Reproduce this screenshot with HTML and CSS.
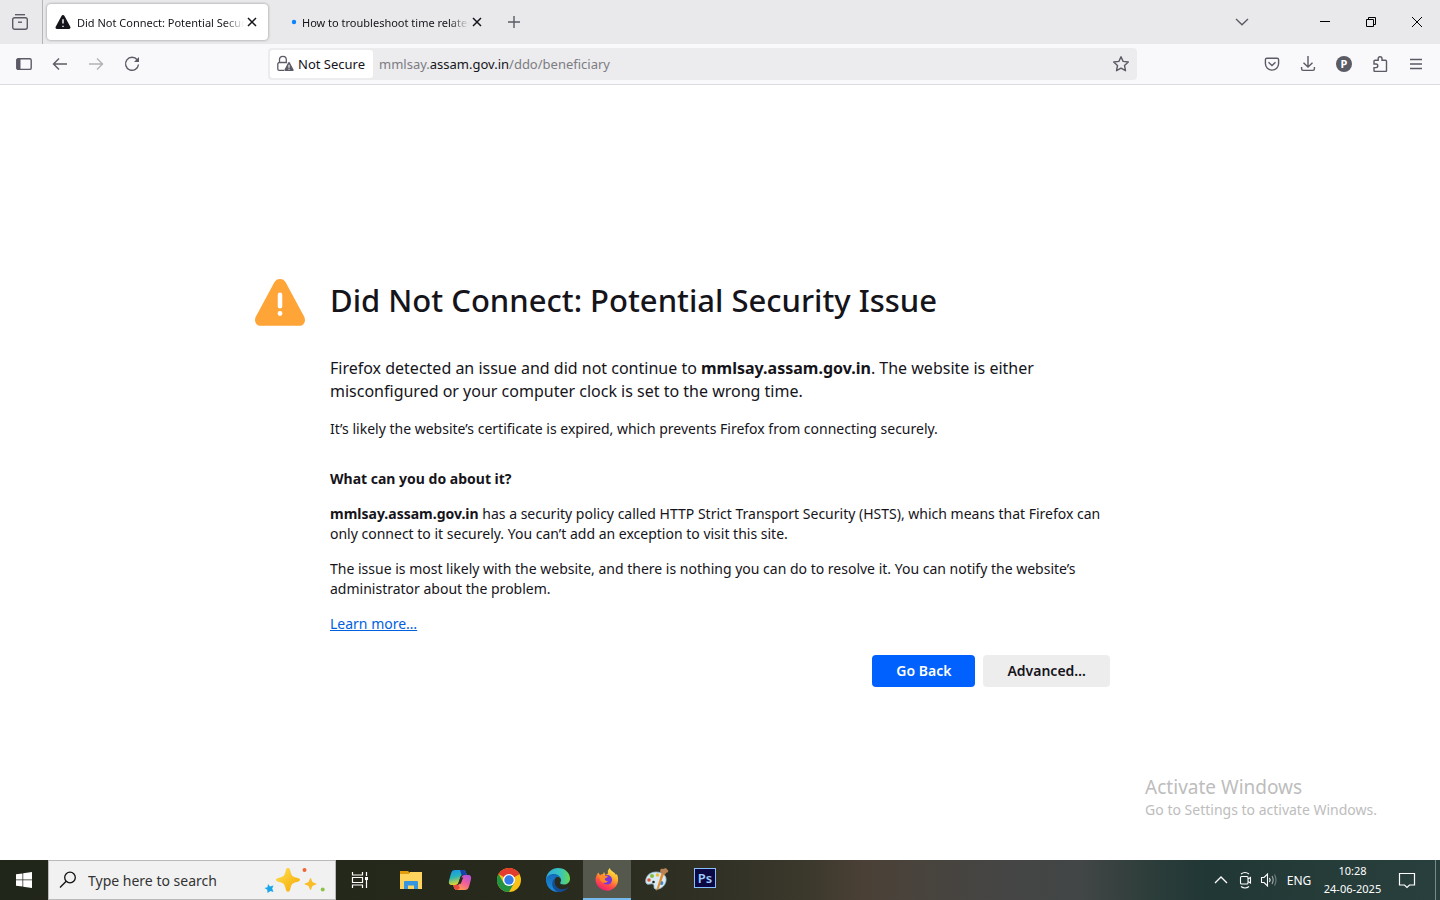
FILE: index.html
```html
<!DOCTYPE html>
<html lang="en">
<head>
<meta charset="utf-8">
<title>Did Not Connect: Potential Security Issue</title>
<link rel="stylesheet" href="styles.css">
</head>
<body>
<header class="tabbar">
  <button class="view-btn" aria-label="Firefox View"><svg class="ic" width="18" height="18" viewBox="0 0 18 18"><path d="M4 1.700h10"/><rect x="1.700" y="4.700" width="14.600" height="11.600" rx="2"/><path d="M7 9.200h4"/></svg></button>
  <div class="tabs">
    <div class="tab active">
      <svg width="16" height="16" viewBox="0 0 16 16"><path d="M8 1c.7 0 1.200.3 1.500.9l5.800 10.800c.6 1.100-.1 2.300-1.300 2.300H2c-1.200 0-1.900-1.200-1.300-2.300L6.500 1.900C6.800 1.300 7.300 1 8 1z" fill="#15141a"/><path d="M8 5.300v4.200M8 11.700v1.200" stroke="#fff" stroke-width="1.400"/></svg>
      <span class="tab-title">Did Not Connect: Potential Security Issue</span>
      <button class="tab-close" aria-label="Close tab"><svg width="10" height="10" viewBox="0 0 10 10"><path d="M1 1l8 8M9 1L1 9" stroke="#15141a" stroke-width="1.500"/></svg></button>
    </div>
    <div class="tab">
      <svg width="16" height="16" viewBox="0 0 16 16"><circle cx="8" cy="8" r="2.200" fill="#0a84ff"/></svg>
      <span class="tab-title">How to troubleshoot time related errors</span>
      <button class="tab-close" aria-label="Close tab"><svg width="10" height="10" viewBox="0 0 10 10"><path d="M1 1l8 8M9 1L1 9" stroke="#15141a" stroke-width="1.500"/></svg></button>
    </div>
  </div>
  <button class="tool" aria-label="New tab"><svg class="ic" width="12" height="12" viewBox="0 0 12 12"><path d="M6 0v12M0 6h12"/></svg></button>
  <div class="grow"></div>
  <button class="tool list-tabs" aria-label="List all tabs"><svg class="ic" width="14" height="8" viewBox="0 0 14 8"><path d="M1 1l6 5.700L13 1"/></svg></button>
  <button class="win" aria-label="Minimize"><svg width="10" height="10" viewBox="0 0 10 10"><path d="M0 4.500h10" stroke="#000"/></svg></button>
  <button class="win" aria-label="Restore"><svg width="10" height="10" viewBox="0 0 10 10" fill="none" stroke="#000"><path d="M.5 2.500h7v7h-7zM2.500 2.500v-2h7v7h-2"/></svg></button>
  <button class="win" aria-label="Close"><svg width="10" height="10" viewBox="0 0 10 10"><path d="M0 0l10 10M10 0L0 10" stroke="#000"/></svg></button>
</header>
<nav class="toolbar">
  <div class="tools">
    <button class="tool" aria-label="Sidebar"><svg class="ic" width="16" height="16" viewBox="0 0 16 16"><rect x=".8" y="2.800" width="14.400" height="10.600" rx="1.500"/><path d="M1 3h3v10H1z" fill="#5b5b66" stroke-width="1"/></svg></button>
    <button class="tool" aria-label="Back"><svg class="ic" width="16" height="16" viewBox="0 0 16 16"><path d="M15 8H1.500M7 2.500L1.500 8 7 13.500"/></svg></button>
    <button class="tool" aria-label="Forward" disabled><svg class="ic faint" width="16" height="16" viewBox="0 0 16 16"><path d="M1 8h13.500M9 2.500L14.500 8 9 13.500"/></svg></button>
    <button class="tool" aria-label="Reload"><svg class="ic" width="16" height="16" viewBox="0 0 16 16"><path d="M13.200 3.800A6.500 6.500 0 1 0 14.500 8.500"/><path d="M15 1v5h-5z" fill="#5b5b66" stroke="none"/></svg></button>
  </div>
  <div class="urlbar">
    <button class="identity"><svg width="18" height="18" viewBox="0 0 18 18"><path d="M8 15.300H3.200a1.400 1.400 0 0 1-1.400-1.400V9a1.500 1.500 0 0 1 1.500-1.500h7M3.500 7.500V4.800a3.400 3.400 0 0 1 6.800 0v3.500" fill="none" stroke="#5b5b66" stroke-width="1.300"/><path d="M12.200 7.400c.4-.7 1.200-.7 1.600 0l3.700 7.100c.4.800 0 1.500-.8 1.500H9.300c-.8 0-1.200-.7-.8-1.500z" fill="#5b5b66"/><path d="M13 9.800v3M13 13.700v1" stroke="#fff" stroke-width="1.100"/></svg><span>Not Secure</span></button>
    <div class="address" role="textbox" aria-label="Address" tabindex="0">mmlsay.<b>assam.gov.in</b>/ddo/beneficiary</div>
    <button class="star" aria-label="Bookmark this page"><svg class="ic" width="18" height="18" viewBox="0 0 18 18"><path stroke-linejoin="round" d="M9 1.700l2.100 4.700 5.200.6-3.800 3.500 1 5.200L9 13.200l-4.500 2.500 1-5.200L1.700 7l5.200-.6z"/></svg></button>
  </div>
  <div class="tools tools-end">
    <button class="tool" aria-label="Pocket"><svg class="ic" width="16" height="16" viewBox="0 0 16 16"><path d="M3 2.200h10a1.600 1.600 0 0 1 1.600 1.600V7.500a6.600 6.600 0 0 1-13.200 0V3.800A1.600 1.600 0 0 1 3 2.200z"/><path d="M4.500 6.300L8 9.600l3.500-3.300"/></svg></button>
    <button class="tool" aria-label="Downloads"><svg class="ic" width="16" height="16" viewBox="0 0 16 16"><path d="M8 0v11M3.500 6.700L8 11l4.500-4.300M1.600 11v1.800a1.600 1.600 0 0 0 1.600 1.600h9.600a1.600 1.600 0 0 0 1.600-1.600V11"/></svg></button>
    <button class="tool" aria-label="Account"><span class="avatar">P</span></button>
    <button class="tool" aria-label="Extensions"><svg class="ic" width="16" height="16" viewBox="0 0 16 16"><path d="M2 8V5.200c0-.6.4-1 1-1h3.200V2.700a1.900 1.900 0 0 1 3.800 0v1.500h3.500c.6 0 1 .4 1 1v9.300c0 .6-.4 1-1 1H3c-.6 0-1-.4-1-1v-2.900h2a1.800 1.800 0 0 0 0-3.600z"/></svg></button>
    <button class="tool" aria-label="Menu"><svg class="ic" width="14" height="12" viewBox="0 0 14 12"><path d="M1 1.500h12M1 6h12M1 10.500h12"/></svg></button>
  </div>
</nav>
<main class="page">
  <div class="error">
    <svg class="warning" width="52" height="50" viewBox="0 0 52 50"><path d="M26 1c2.500 0 4.400 1.200 5.600 3.300l18.500 34.200c2.300 4.400-.2 9.300-5 9.300H6.900c-4.800 0-7.300-4.900-5-9.300L20.400 4.300C21.600 2.200 23.500 1 26 1z" fill="#ffa436"/><path d="M26 16.700v11.500" stroke="#fff" stroke-width="4.500" stroke-linecap="round"/><circle cx="26" cy="35.500" r="2.400" fill="#fff"/></svg>
    <div class="text">
      <h1>Did Not Connect: Potential Security Issue</h1>
      <p class="lead">Firefox detected an issue and did not continue to <b>mmlsay.assam.gov.in</b>. The website is either<br>misconfigured or your computer clock is set to the wrong time.</p>
      <p>It’s likely the website’s certificate is expired, which prevents Firefox from connecting securely.</p>
      <h2>What can you do about it?</h2>
      <p><b>mmlsay.assam.gov.in</b> has a security policy called HTTP Strict Transport Security (HSTS), which means that Firefox can<br>only connect to it securely. You can’t add an exception to visit this site.</p>
      <p>The issue is most likely with the website, and there is nothing you can do to resolve it. You can notify the website’s<br>administrator about the problem.</p>
      <p><a href="#">Learn more…</a></p>
      <div class="actions"><button class="btn primary">Go Back</button><button class="btn">Advanced…</button></div>
    </div>
  </div>
  <div class="watermark"><div class="wm-title">Activate Windows</div><div>Go to Settings to activate Windows.</div></div>
</main>
<footer class="taskbar">
  <button class="task" aria-label="Start"><svg width="16" height="16" viewBox="0 0 16 16"><path fill="#fff" d="M0 2.300l6.500-.9v6.200H0zM7.200 1.300L16 0v7.600H7.200zM0 8.300h6.500v6.300L0 13.700zM7.200 8.300H16V16l-8.800-1.300z"/></svg></button>
  <label class="search">
    <svg width="18" height="18" viewBox="0 0 18 18" fill="none" stroke="#111" stroke-width="1.300"><circle cx="11" cy="6.500" r="5.300"/><path d="M7.200 10.300L1 16.500"/></svg>
    <input type="text" placeholder="Type here to search" aria-label="Search">
    <svg width="62" height="28" viewBox="0 0 62 28"><defs><linearGradient id="gold" x2="1" y2="1"><stop stop-color="#ffe052"/><stop offset="1" stop-color="#f5a800"/></linearGradient></defs><path d="M24 2c1.600 0 2 1.500 2.600 4 1.100 4 2.200 4.700 5.400 5.500 2.600.6 4 1.100 4 2.300s-1.400 1.800-4 2.400c-3.200.8-4.300 1.500-5.400 5.500-.6 2.500-1 4-2.600 4s-2-1.500-2.600-4c-1.100-4-2.200-4.700-5.400-5.500-2.600-.6-4-1.200-4-2.400s1.400-1.700 4-2.300c3.200-.8 4.300-1.500 5.400-5.500.6-2.500 1-4 2.600-4z" fill="url(#gold)"/><path d="M46.500 12c.8 0 1.200 3.200 2 4s4 1 4 2-3.200 1.200-4 2-1.200 4-2 4-1.200-3.200-2-4-4-1-4-2 3.200-1.200 4-2 1.200-4 2-4z" fill="#f9bd25"/><path d="M4 18l2 2.500 3.500-1-1.300 3L9.500 26l-3-1L3.500 27l-.2-3.200L.5 22l3-.8z" fill="#18a5ea"/><circle cx="40.500" cy="4" r="2" fill="#ef6538"/><circle cx="58.700" cy="23.500" r="2" fill="#8bc34a"/></svg>
  </label>
  <button class="task view" aria-label="Task view"><svg width="18" height="18" viewBox="0 0 18 18" fill="none" stroke="#fff" stroke-width="1.200"><path d="M1.500 1v3h10V1M1.500 17v-3h10v3M1.500 6.500h10v5h-10zM15.500 1v4M15.500 9v8"/><path d="M14 6h3v3h-3z" fill="#fff" stroke="none"/></svg></button>
  <div class="apps">
    <button class="task" aria-label="File Explorer"><svg width="24" height="24" viewBox="0 0 24 24"><path d="M1 3h8l2 2h11v16H1z" fill="#e39d0c"/><path d="M1 6h9l1-2h12v17H1z" fill="#ffd45e"/><path d="M5 21v-7q0-1 1-1h12q1 0 1 1v7h-4v-3.500H9V21z" fill="#3595df"/></svg></button>
    <button class="task" aria-label="Copilot"><svg width="24" height="24" viewBox="0 0 24 24"><defs><linearGradient id="cp1" x2=".3" y2="1"><stop stop-color="#1592ef"/><stop offset=".5" stop-color="#29b4b8"/><stop offset="1" stop-color="#e8d52a"/></linearGradient><linearGradient id="cp2" x1="1" x2=".4" y2="1"><stop stop-color="#a952e8"/><stop offset=".55" stop-color="#f25f9a"/><stop offset="1" stop-color="#ff9d4d"/></linearGradient></defs><path d="M7 2h8c2 0 2.600 1 3.200 3l.6 2H15c-2 0-2.500 1-3 3l-1.500 4.500C10 16 9 17 7 17H4c-3 0-3.600-2-2.800-5L3 5.500C3.700 3 5 2 7 2z" fill="url(#cp1)"/><path d="M12 2h3c2 0 2.600 1 3.200 3l.6 2h-5.300z" fill="#1743a8"/><path d="M17 22H9c-2 0-2.600-1-3.200-3l-.6-2H9c2 0 2.500-1 3-3l1.500-4.500C14 8 15 7 17 7h3c3 0 3.600 2 2.800 5L21 18.500c-.7 2.500-2 3.500-4 3.500z" fill="url(#cp2)"/><path d="M5.200 17h5.200l1.500 3-2.400 2C7.500 22 6 21 5.200 17z" fill="#e9483f"/><path d="M12.600 9.500h2.600l-2.400 6.300h-2.600z" fill="#25281e"/></svg></button>
    <button class="task" aria-label="Chrome"><svg width="24" height="24" viewBox="0 0 24 24"><circle cx="12" cy="12" r="12" fill="#fbc116"/><path d="M12 12L1.600 6A12 12 0 0 1 22.400 6z" fill="#e33b2e"/><path d="M12 6h10.400L12 12z" fill="#e33b2e"/><path d="M1.600 6A12 12 0 0 0 12 24l5.200-9L12 12 6.800 15z" fill="#229342"/><circle cx="12" cy="12" r="6" fill="#fff"/><circle cx="12" cy="12" r="4.700" fill="#347bea"/></svg></button>
    <button class="task" aria-label="Edge"><svg width="24" height="24" viewBox="0 0 24 24"><defs><linearGradient id="e1" x2="1"><stop stop-color="#2fa9df"/><stop offset=".6" stop-color="#38c5bd"/><stop offset="1" stop-color="#69d84d"/></linearGradient><linearGradient id="e2" x2="0" y2="1"><stop stop-color="#1469b8"/><stop offset="1" stop-color="#1c8fde"/></linearGradient></defs><path d="M0 11C1 4 6 0 12 0c7 0 12 5 12 10.500 0 4-3 6-6.200 6-2.800 0-4-1-3.500-2 1.800-2.600.2-6-3.300-6C6 8.500 2 10 0 15z" fill="url(#e1)"/><path d="M0 12c.5-4 4-6 7.500-6 4 0 7 2 7.300 5-1-1.700-2.500-2.300-4-2.200C8 10.500 7.500 15 9.500 18c2 3 6 5 9.500 3.600-6 4.400-18 2.900-19-9.600z" fill="url(#e2)"/><path d="M10.800 9c-3.300 2-3 7-.8 9.500 3 3.600 8.500 3.700 12.500.5-2 3.500-6 5-10 5C5 22 4 12 10.800 9z" fill="#124d96"/></svg></button>
    <button class="task current" aria-label="Firefox"><svg width="24" height="24" viewBox="0 0 24 24"><defs><linearGradient id="fx" x1=".8" x2=".3" y2="1"><stop stop-color="#fff04a"/><stop offset=".4" stop-color="#ffa72b"/><stop offset=".7" stop-color="#ff4f46"/><stop offset="1" stop-color="#ed1c73"/></linearGradient></defs><path d="M3.300 4.500L5 7l3-1 1-2 1.500 3 2.500-1.500c-.7-2.500.5-4.500 2-5.500 0 3 5 4 6 7l.7-1c2.300 4 1.700 9.500-1 12.500A11.500 11.500 0 0 1 .5 12c0-3 1.300-5.500 2.800-7.500z" fill="url(#fx)"/><circle cx="12.300" cy="11.800" r="4.800" fill="#7a36d8"/><path d="M4 8c2-2 4-1.500 6 0h3c-.5 1.500-2 2-3 2.500-.8 1 .5 3 3 2.500-2 3-6 2-7.500-.5z" fill="#ff8b24"/></svg></button>
    <button class="task" aria-label="Paint"><svg width="26" height="26" viewBox="0 0 26 26"><path d="M13 5c7 0 11 4 10 9-1 6-7 9-11 8-2-1 0-4-2-5-2-.8-4 1-6 0-3-2-1-12 9-12z" fill="#d8eaf3" stroke="#91b8cc" stroke-width=".8"/><circle cx="6" cy="13" r="1.800" fill="#df563d"/><circle cx="9" cy="9" r="2" fill="#86bd41"/><circle cx="14.500" cy="8" r="1.800" fill="#edbd3a"/><circle cx="18.500" cy="16" r="1.900" fill="#3986d1"/><circle cx="10.500" cy="15" r="1.300" fill="#282a20"/><path d="M13 24l3-3 5-14-2.500-1z" fill="#e48b2f"/><path d="M18 6c-2-3 0-5 2-4l3-1c1 2 3 2 2 4-1 1-2 0-3 3z" fill="#b98254"/></svg></button>
    <button class="task" aria-label="Photoshop"><span class="ps">Ps</span></button>
  </div>
  <div class="grow"></div>
  <button class="tray" aria-label="Show hidden icons"><svg width="14" height="8" viewBox="0 0 14 8" fill="none" stroke="#fff" stroke-width="1.300"><path d="M1 7l6-6 6 6"/></svg></button>
  <button class="tray" aria-label="Meet Now"><svg width="14" height="18" viewBox="0 0 14 18" fill="none" stroke="#fff" stroke-width="1.100"><rect x="2.500" y="5.500" width="7.500" height="7.500" rx="1"/><path d="M10 8l2.500-1.500v5.500L10 10.500M3 3q4-3 8 0M3 15.500q4 3 8 0"/></svg></button>
  <button class="tray" aria-label="Volume"><svg width="18" height="16" viewBox="0 0 18 16" fill="none" stroke="#fff" stroke-width="1.100"><path d="M1.500 5.500H4L7.500 2v12L4 10.500H1.500z"/><path d="M9.500 6q1.300 2 0 4"/><path d="M12 4q2.400 4 0 8" stroke="#a5b0af"/><path d="M14.500 2.500q3 5.500 0 11" stroke="#718180"/></svg></button>
  <button class="lang">ENG</button>
  <button class="clock"><span>10:28</span><span>24-06-2025</span></button>
  <button class="note" aria-label="Notifications"><svg width="18" height="18" viewBox="0 0 18 18" fill="none" stroke="#fff" stroke-width="1.200"><path d="M1.500 2.500h15v11.500h-5L9 16.500 6.500 14h-5z"/></svg></button>
</footer>
</body>
</html>
```
FILE: styles.css
```css
* { box-sizing: border-box; }
body {
  margin: 0;
  min-height: 100vh;
  display: flex;
  flex-direction: column;
  font-family: "Noto Sans", "Open Sans", sans-serif;
  font-size: 14px;
  color: #15141a;
  background: #fff;
}
button { font: inherit; color: inherit; border: 0; padding: 0; background: none; }
svg { display: block; flex: none; }
.ic { fill: none; stroke: #5b5b66; stroke-width: 1.4; }
.faint { opacity: .45; }
.grow { flex: 1; }

.tabbar { display: flex; align-items: center; height: 44px; background: #e9e9eb; }
.view-btn { display: grid; place-items: center; width: 43px; height: 44px; padding-right: 2px; border-right: 1px solid #b5b5b8; }
.tabs { display: flex; gap: 4px; padding-left: 4px; }
.tab { display: flex; align-items: center; width: 221px; height: 36px; padding: 0 8px; border-radius: 4px; font-size: 11px; }
.tab svg + .tab-title { margin-left: 6px; }
.tab:not(.active) { padding-left: 14px; }
.tab:not(.active) .tab-title { margin-left: 0; }
.tab.active { background: #fff; box-shadow: 0 0 3px rgba(0, 0, 0, .4); }
.tab-title { flex: 1; min-width: 0; overflow: hidden; white-space: nowrap; mask-image: linear-gradient(to left, transparent, #000 20px); }
.tab-close { display: grid; place-items: center; width: 16px; height: 24px; }
.tool { display: grid; place-items: center; width: 36px; height: 36px; }
.tabs + .tool { margin-left: 3px; }
.list-tabs { margin-right: 42px; }
.win { display: grid; place-items: center; width: 46px; height: 44px; }

.toolbar {
  display: grid;
  grid-template-columns: auto 118fr 869fr 117fr auto;
  align-items: center;
  height: 41px;
  padding: 0 6px;
  background: #f9f9fb;
  border-bottom: 1px solid #dcdce0;
}
.tools { display: flex; }
.tools-end { grid-column: 5; }
.urlbar { grid-column: 3; display: flex; align-items: center; height: 32px; padding: 2px; border-radius: 4px; background: #ececee; font-size: 13px; }
.identity { display: flex; align-items: center; gap: 4px; height: 28px; padding: 0 8px 0 6px; border-radius: 3px; background: #fff; white-space: nowrap; }
.address { flex: 1; padding-left: 6px; color: #7c7c82; white-space: nowrap; }
.address b { font-weight: 400; color: #15141a; }
.star { display: grid; place-items: center; width: 28px; height: 28px; }
.avatar { width: 16px; height: 16px; border-radius: 50%; background: #5b5b66; color: #fff; font-size: 11px; line-height: 16px; font-weight: 700; }

.page { position: relative; flex: 1; display: grid; place-items: center; padding: 34px 24px 16px; }
.error { display: grid; grid-template-columns: 52px minmax(0, 780px) 52px; gap: 0 24px; }
.warning { margin-top: 1px; }
h1 { margin: 0 0 34px; font-size: 31px; line-height: 46px; font-weight: 500; }
p { margin: 0 0 15px; line-height: 20px; }
.lead { margin-bottom: 16px; font-size: 16px; line-height: 23px; }
h2 { margin: 30px 0 15px; font-size: 14px; line-height: 20px; font-weight: 700; }
a { color: #0061e0; }
.actions { display: flex; justify-content: flex-end; gap: 8px; margin-top: 21px; }
.btn { height: 32px; padding: 0 24px; border-radius: 4px; background: #ededee; font-weight: 600; }
.primary { background: #0061fe; color: #fff; }
.watermark { position: absolute; right: 63px; bottom: 40px; color: #bdbdbd; line-height: 20px; }
.wm-title { font-size: 19px; line-height: 26px; }

.taskbar {
  display: flex;
  align-items: center;
  height: 40px;
  color: #fff;
  background: linear-gradient(to right, #202619 0, #26291c 35%, #303024 49%, #3b382c 56%, #4b4036 60%, #48443d 64%, #454545 70%, #424646 75%, #2c3d3a 80%, #203735 84%, #263c39 92%, #283f3d 100%);
}
.task { display: grid; place-items: center; width: 48px; height: 40px; }
.view { margin-right: 3px; }
.apps { display: flex; gap: 1px; }
.current { background: #55584c; border-bottom: 2px solid #76b9ed; padding-top: 1px; }
.search { display: flex; align-items: center; width: 288px; height: 40px; padding: 0 9px 0 10px; border: 1px solid #b9b9b9; background: #f1f1f1; }
.search input { flex: 1; min-width: 0; margin-left: 11px; padding: 0; border: 0; outline: 0; background: none; font: inherit; color: #333; }
.search input::placeholder { color: #333; opacity: 1; }
.ps { width: 22px; height: 20px; border: 1px solid #8abfff; background: #0c0843; color: #9dccff; font-size: 13px; line-height: 18px; font-weight: 600; margin-bottom: 4px; }
.tray { display: grid; place-items: center; width: 24px; height: 40px; }
.lang { width: 36px; font-size: 12px; }
.clock { display: flex; flex-direction: column; align-items: center; width: 71px; font-size: 11px; line-height: 18px; }
.note { display: grid; place-items: center; width: 48px; height: 40px; margin-right: 4px; border-right: 1px solid #78898a; padding-right: 9px; }
```
